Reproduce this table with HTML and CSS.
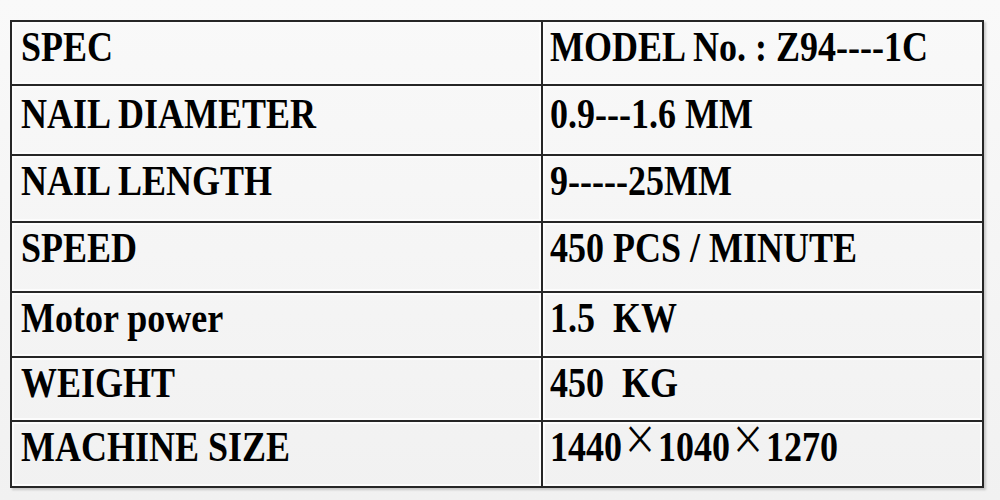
FILE: index.html
```html
<!DOCTYPE html>
<html>
<head>
<meta charset="utf-8">
<link rel="stylesheet" href="styles.css">
</head>
<body>
<table class="spec">
  <tr class="r1"><td class="k"><span class="t">SPEC</span></td><td class="v"><span class="t">MODEL No. : Z94----1C</span></td></tr>
  <tr class="r2"><td class="k"><span class="t">NAIL DIAMETER</span></td><td class="v"><span class="t">0.9---1.6 MM</span></td></tr>
  <tr class="r3"><td class="k"><span class="t">NAIL LENGTH</span></td><td class="v"><span class="t">9-----25MM</span></td></tr>
  <tr class="r4"><td class="k"><span class="t">SPEED</span></td><td class="v"><span class="t">450 PCS / MINUTE</span></td></tr>
  <tr class="r5"><td class="k"><span class="t">Motor power</span></td><td class="v"><span class="t">1.5  KW</span></td></tr>
  <tr class="r6"><td class="k"><span class="t">WEIGHT</span></td><td class="v"><span class="t">450  KG</span></td></tr>
  <tr class="r7"><td class="k"><span class="t">MACHINE SIZE</span></td><td class="v"><span class="t">1440<span class="x">×</span>1040<span class="x">×</span>1270</span></td></tr>
</table>
</body>
</html>
```

FILE: styles.css
```css
html, body {
  margin: 0;
  padding: 0;
}
body {
  width: 1000px;
  height: 500px;
  background: linear-gradient(#f9f9f9, #f1f1f1);
  padding: 20px 0 0 10px;
  box-sizing: border-box;
  font-family: "Liberation Serif", "Times New Roman", serif;
  font-weight: bold;
  color: #000;
}
.spec {
  border-collapse: collapse;
  width: 974px;
  table-layout: fixed;
  box-shadow: 2px 2px 2px rgba(0, 0, 0, 0.18);
}
.spec td {
  border: 2px solid #262626;
  padding: 4px 0 0 8px;
  vertical-align: top;
  box-shadow: inset 0 0 0 2px #fcfcfc;
  box-sizing: border-box;
}
.spec td.k {
  width: 531px;
  padding-left: 9px;
}
.spec td.v {
  padding-left: 7px;
}
.t {
  display: inline-block;
  font-size: 36px;
  line-height: 36px;
  white-space: pre;
  transform: scaleY(1.18);
  transform-origin: 0 0;
}
.x {
  font-family: "Noto Sans CJK SC", "DejaVu Sans", sans-serif;
  font-weight: normal;
  font-size: 34px;
  display: inline-block;
  vertical-align: top;
  margin-top: -8px;
  padding: 0 1px;
}
.r1 td { height: 64px; }
.r2 td { height: 70px; padding-top: 7px; }
.r3 td { height: 67px; }
.r4 td { height: 70px; }
.r5 td { height: 65px; }
.r6 td { height: 64px; }
.r7 td { height: 66px; }
```
